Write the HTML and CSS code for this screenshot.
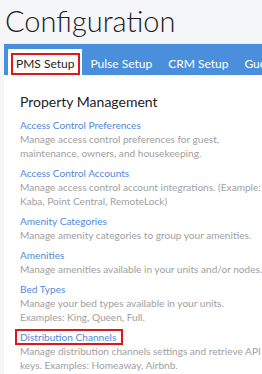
FILE: index.html
```html
<!DOCTYPE html>
<html lang="en">
<head>
    <meta charset="UTF-8">
    <meta name="viewport" content="width=device-width, initial-scale=1.0">
    <title>Configuration</title>
    <link rel="stylesheet" href="styles.css">
</head>
<body>
    <h1 class="page-title">Configuration</h1>
    <div class="panel">
        <div class="tabs">
            <div class="tab active"><span class="mark">PMS Setup</span></div>
            <div class="tab">Pulse Setup</div>
            <div class="tab">CRM Setup</div>
            <div class="tab">Guest Setup</div>
        </div>
        <div class="content">
            <h2 class="section-title">Property Management</h2>
            <div class="item">
                <a class="item-link">Access Control Preferences</a>
                <p class="item-desc">Manage access control preferences for guest,<br>maintenance, owners, and housekeeping.</p>
            </div>
            <div class="item">
                <a class="item-link">Access Control Accounts</a>
                <p class="item-desc">Manage access control account integrations. (Example:<br>Kaba, Point Central, RemoteLock)</p>
            </div>
            <div class="item">
                <a class="item-link">Amenity Categories</a>
                <p class="item-desc">Manage amenity categories to group your amenities.</p>
            </div>
            <div class="item">
                <a class="item-link">Amenities</a>
                <p class="item-desc">Manage amenities available in your units and/or nodes.</p>
            </div>
            <div class="item">
                <a class="item-link">Bed Types</a>
                <p class="item-desc">Manage your bed types available in your units.<br>Examples: King, Queen, Full.</p>
            </div>
            <div class="item">
                <a class="item-link marked">Distribution Channels</a>
                <p class="item-desc">Manage distribution channels settings and retrieve API<br>keys. Examples: Homeaway, Airbnb.</p>
            </div>
        </div>
    </div>
</body>
</html>
```

FILE: styles.css
```css
body, html {
    margin: 0;
    background-color: #f5f6f8;
    font-family: Lato, "Open Sans", Arial, sans-serif;
    overflow: hidden;
}
.page-title {
    margin: 0;
    padding: 0 0 0 5px;
    height: 43px;
    font-size: 29px;
    font-weight: 300;
    line-height: 42px;
    color: #222;
    white-space: nowrap;
}
.panel {
    margin-left: 4px;
    width: 300px;
    background-color: #ffffff;
    border-top: 1px solid #e9eef4;
}
.tabs {
    display: flex;
    height: 31px;
    box-sizing: border-box;
    background-color: #4a8fdc;
    padding: 5px 0 0 4px;
    white-space: nowrap;
    overflow: hidden;
}
.tab {
    padding: 4px 8px 0 8px;
    color: #ffffff;
    font-size: 12px;
    line-height: 22px;
}
.tab.active {
    background-color: #ffffff;
    color: #222;
    padding: 4px 2px 0 3px;
}
.mark {
    display: block;
    padding: 0 6px 0 5px;
    outline: 2px solid #e4141b;
    outline-offset: -2px;
}
.content {
    padding: 17px 10px 20px 16px;
}
.section-title {
    margin: 0 0 6px 0;
    font-size: 14px;
    font-weight: 400;
    color: #222;
    line-height: 20px;
}
.item {
    margin-bottom: 6px;
    font-size: 10.1px;
    line-height: 14px;
}
.item-link {
    display: inline-block;
    vertical-align: top;
    color: #5089da;
}
.item-link.marked {
    padding: 0 6px 0 4px;
    margin-left: -4px;
    outline: 2px solid #e4141b;
    outline-offset: -1px;
}
.item-desc {
    margin: 0;
    color: #a0a0a0;
    white-space: nowrap;
}
```
